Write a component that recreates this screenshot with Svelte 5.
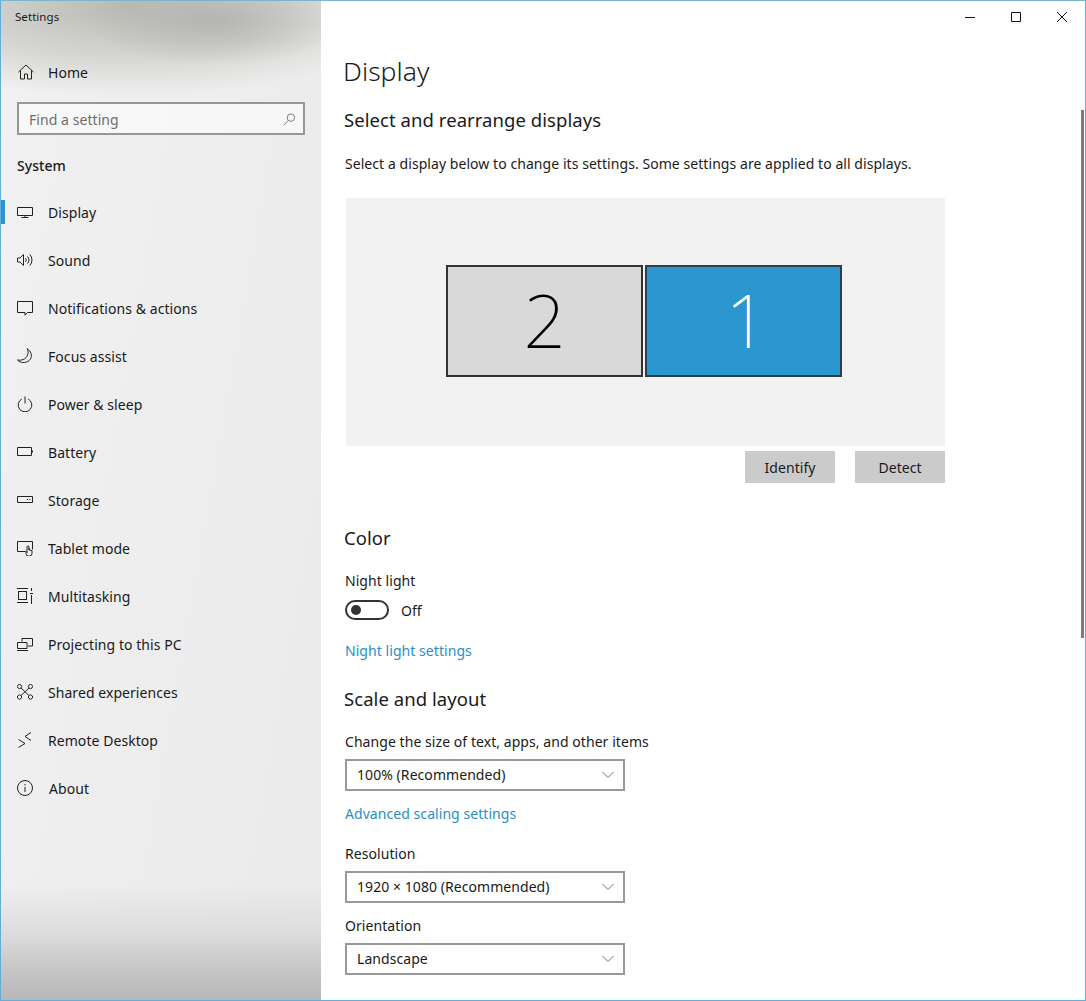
<script>
  // icon paths are drawn on a 16x16 box
  const navItems = [
    { label: "Display", active: true, d: "M.5 3.500h15v8H.5zM8 11.500v2M4.500 13.500h7" },
    { label: "Sound", d: "M.5 6v4h2.500l3.500 3.500v-11L3 6zM8.500 6.200a2.600 2.600 0 0 1 0 3.600M10.500 4.500a5 5 0 0 1 0 7M12.800 2.500a8 8 0 0 1 0 11" },
    { label: "Notifications & actions", d: "M.5 1.500h15v11h-5l-2.500 2.700v-2.700H.5z" },
    { label: "Focus assist", d: "M10 .5c4 2.500 5.500 7 3.500 10.500-2.500 4-9.500 5-13 1 5.500 1 9.800-2 10.500-6.500.2-1.800-.1-3.500-1-5z" },
    { label: "Power & sleep", d: "M8 .5v7M4.800 3a6.800 6.800 0 1 0 6.400 0" },
    { label: "Battery", d: "M.5 3.500h14v8H.5zM15.500 6.500v2" },
    { label: "Storage", d: "M.5 4.500h15v6H.5zM10 7.500h1M12.500 7.500h1" },
    { label: "Tablet mode", d: "M8.500 11.500H.5V1.500h15v8M10 13V7a1 1 0 0 1 2 0v3l3 .5v3a2.500 2.500 0 0 1-2.500 2.500H11.500A2.500 2.500 0 0 1 9 13.500V11M12 10V8" },
    { label: "Multitasking", d: "M0 .5h11M0 14.500h11M1.500 3v9M9.500 3v9M1.500 3.500h8M1.500 11.500h8M14.500 0v3M13 5.500h3M14.500 7v9" },
    { label: "Projecting to this PC", d: "M5 5.500V2.500h10.500v7.500H11M.5 6.500h9.500v6H.5zM0 14.500h11" },
    { label: "Shared experiences", d: "M1 1a2 2 0 1 0 3 3 2 2 0 0 0-3-3zM12 1a2 2 0 1 0 3 3 2 2 0 0 0-3-3zM1 11.500a2 2 0 1 0 3 3 2 2 0 0 0-3-3zM12 11.500a2 2 0 1 0 3 3 2 2 0 0 0-3-3zM4 4l8 7.500M12 4l-8 7.500" },
    { label: "Remote Desktop", d: "M1.500 7.500l6.500 4-6.500 4M14 .5L8 4.500l6 4" },
    { label: "About", shift: true, d: "M8 .5a7.500 7.500 0 1 0 0 15 7.500 7.500 0 0 0 0-15zM8 7v5M8 4v1.500" },
  ];
</script>

<div class="window">
  <aside class="sidebar">
    <div class="app-title">Settings</div>

    <div class="home-row">
      <svg class="icon" viewBox="0 0 16 16"><path d="M.5 8L8 1l7.500 7M2.500 6.500v8.500h4v-5h3v5h4V6.500" /></svg>
      <span>Home</span>
    </div>

    <div class="search">
      <span>Find a setting</span>
      <svg viewBox="0 0 14 14"><path d="M8.500 1a4 4 0 1 1 0 8 4 4 0 0 1 0-8zM5.500 8l-4.500 5" /></svg>
    </div>

    <div class="group-title">System</div>

    <nav>
      {#each navItems as item}
        <div class="nav-row" class:active={item.active} class:shift={item.shift}>
          <svg class="icon" viewBox="0 0 16 16"><path d={item.d} /></svg>
          <span>{item.label}</span>
        </div>
      {/each}
    </nav>
  </aside>

  <main class="content">
    <div class="controls">
      <svg viewBox="0 0 46 32"><path d="M18 16.500h10" /></svg>
      <svg viewBox="0 0 46 32"><path d="M18.500 11.500h9v9h-9z" /></svg>
      <svg viewBox="0 0 46 32"><path d="M18 11l10 10M28 11L18 21" /></svg>
    </div>

    <div class="page">
      <h1>Display</h1>
      <h2 class="first">Select and rearrange displays</h2>
      <p class="desc">Select a display below to change its settings. Some settings are applied to all displays.</p>

      <div class="arrange">
        <div class="monitor">2</div>
        <div class="monitor primary">1</div>
      </div>

      <div class="buttons">
        <button>Identify</button>
        <button>Detect</button>
      </div>

      <h2 class="color">Color</h2>
      <p class="label night">Night light</p>
      <div class="toggle-row">
        <span class="toggle"><i></i></span>
        <span>Off</span>
      </div>
      <p class="link night-link">Night light settings</p>

      <h2 class="scale">Scale and layout</h2>
      <p class="label night">Change the size of text, apps, and other items</p>
      <div class="select">
        <span>100% (Recommended)</span>
        <svg viewBox="0 0 12 6"><path d="M.5 0L6 5.500 11.500 0" /></svg>
      </div>
      <p class="link adv-link">Advanced scaling settings</p>
      <p class="label res">Resolution</p>
      <div class="select">
        <span>1920 × 1080 (Recommended)</span>
        <svg viewBox="0 0 12 6"><path d="M.5 0L6 5.500 11.500 0" /></svg>
      </div>
      <p class="label orient">Orientation</p>
      <div class="select">
        <span>Landscape</span>
        <svg viewBox="0 0 12 6"><path d="M.5 0L6 5.500 11.500 0" /></svg>
      </div>
    </div>

    <div class="scrollbar"></div>
  </main>
</div>

<style>
  :global(body) {
    margin: 0;
    background: #fff;
  }

  .window {
    width: 1086px;
    height: 1001px;
    box-sizing: border-box;
    border: 1px solid #62aedb;
    border-top-color: #7db4cd;
    display: flex;
    overflow: hidden;
    font-family: "Noto Sans", sans-serif;
    font-size: 14px;
    letter-spacing: 0.06px;
    color: #1a1a1a;
  }

  .sidebar {
    width: 320px;
    flex: none;
    background:
      radial-gradient(ellipse 130px 45px at 215px 20px, rgba(165, 165, 165, 0.6), rgba(165, 165, 165, 0) 100%),
      radial-gradient(ellipse 300px 90px at 120px 5px, rgba(185, 185, 178, 0.95), rgba(190, 190, 185, 0.55) 55%, rgba(190, 190, 185, 0) 100%),
      linear-gradient(to top, #b9b7b7 0, #c6c6c5 30px, #dedede 70px, rgba(236, 236, 236, 0) 115px),
      linear-gradient(100deg, #f1f1f1, #eaeaea);
  }

  .app-title {
    height: 32px;
    line-height: 32px;
    padding-left: 14px;
    font-size: 11.500px;
  }

  .icon {
    width: 16px;
    height: 16px;
    flex: none;
    fill: none;
    stroke: #222;
    stroke-width: 1;
  }

  .home-row {
    height: 48px;
    margin-top: 15px;
    padding-left: 17px;
    display: flex;
    align-items: center;
    gap: 14px;
  }

  .search {
    margin: 6px 0 0 16px;
    width: 288px;
    height: 33px;
    box-sizing: border-box;
    border: 2px solid #979797;
    background: rgba(255, 255, 255, 0.55);
    padding: 1px 7px 0 10px;
    display: flex;
    align-items: center;
    justify-content: space-between;
    color: #6d6d6d;
  }

  .search svg {
    width: 13px;
    height: 13px;
    fill: none;
    stroke: #777;
  }

  .group-title {
    margin-top: 19px;
    padding-left: 16px;
    line-height: 24px;
    font-weight: 500;
  }

  nav {
    margin-top: 10px;
  }

  .nav-row {
    height: 48px;
    padding-left: 16px;
    display: flex;
    align-items: center;
    gap: 15px;
    position: relative;
  }

  .nav-row.shift {
    gap: 16px;
  }

  .nav-row.active::before {
    content: "";
    position: absolute;
    left: 0;
    top: 12px;
    width: 4px;
    height: 24px;
    background: #2a96d6;
  }

  .content {
    flex: 1;
    position: relative;
    background: #fff;
  }

  .controls {
    height: 32px;
    display: flex;
    justify-content: flex-end;
  }

  .controls svg {
    width: 46px;
    height: 32px;
    fill: none;
    stroke: #111;
  }

  .page {
    padding: 19px 0 0 24px;
  }

  h1 {
    margin: 0 0 0 -2px;
    font-size: 26.500px;
    font-weight: 300;
    line-height: 38px;
  }

  h2 {
    margin: 0 0 0 -1px;
    font-size: 18.500px;
    font-weight: 400;
    line-height: 28px;
  }

  h2.first {
    margin-top: 16px;
  }

  h2.color {
    margin-top: 41px;
  }

  h2.scale {
    margin-top: 24px;
  }

  p {
    margin: 0;
    line-height: 20px;
  }

  .desc {
    margin-top: 20px;
  }

  .arrange {
    margin: 24px 0 0 1px;
    width: 599px;
    height: 248px;
    background: #f2f2f2;
    display: flex;
    gap: 2px;
    padding: 67px 0 0 100px;
    box-sizing: border-box;
  }

  .monitor {
    width: 197px;
    height: 112px;
    box-sizing: border-box;
    border: 2px solid #333;
    background: #d9d9d9;
    color: #000;
    font-size: 74px;
    font-weight: 200;
    line-height: 106px;
    text-align: center;
  }

  .monitor.primary {
    width: 197px;
    background: #2b96cf;
    border-color: #2b3f4d;
    color: #fff;
    padding-left: 6px;
  }

  .buttons {
    width: 600px;
    margin-top: 5px;
    display: flex;
    justify-content: flex-end;
    gap: 20px;
  }

  button {
    width: 90px;
    height: 32px;
    border: 0;
    padding: 0;
    background: #cbcbcb;
    color: #1a1a1a;
    font: inherit;
    letter-spacing: inherit;
  }

  .night {
    margin-top: 19px;
  }

  .toggle-row {
    margin-top: 9px;
    height: 20px;
    display: flex;
    align-items: center;
    gap: 12px;
  }

  .toggle {
    width: 44px;
    height: 20px;
    box-sizing: border-box;
    border: 2px solid #333;
    border-radius: 10px;
    display: flex;
    align-items: center;
    padding-left: 4px;
  }

  .toggle i {
    width: 10px;
    height: 10px;
    border-radius: 50%;
    background: #333;
  }

  .link {
    color: #2a8fc4;
  }

  .night-link {
    margin-top: 21px;
  }

  .select {
    margin-top: 7px;
    width: 280px;
    height: 32px;
    box-sizing: border-box;
    border: 2px solid #999;
    padding: 0 9px 2px 10px;
    display: flex;
    align-items: center;
    justify-content: space-between;
  }

  .select svg {
    width: 12px;
    height: 6px;
    fill: none;
    stroke: #777;
    margin-top: 2px;
  }

  .adv-link {
    margin-top: 13px;
  }

  .res {
    margin-top: 20px;
  }

  .orient {
    margin-top: 13px;
  }

  .scrollbar {
    position: absolute;
    right: 1px;
    top: 109px;
    width: 3px;
    height: 528px;
    background: #7a7a7a;
  }
</style>
